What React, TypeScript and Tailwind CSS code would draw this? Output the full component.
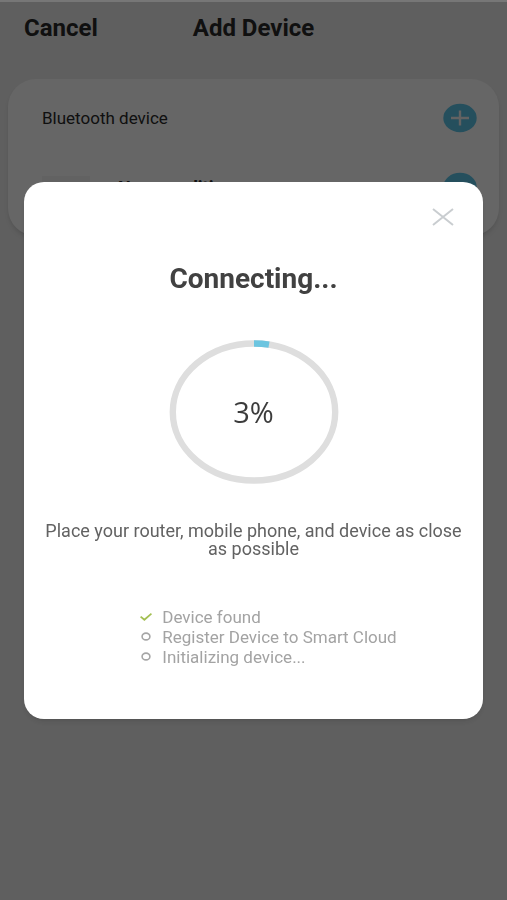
import React from "react";

function RoundButton({ label, icon }: { label: string; icon: "plus" | "minus" }) {
  return (
    <button type="button" aria-label={label} className="block shrink-0">
      <svg width="34" height="30" viewBox="0 0 34 30" fill="none" aria-hidden="true">
        <ellipse cx="17" cy="15" rx="16.7" ry="14.2" fill="#5ec5e8" />
        <path d={icon === "plus" ? "M8 15H26M17 7.5V22.5" : "M8 15H26"} stroke="#f4f4f4" strokeWidth="2.4" />
      </svg>
    </button>
  );
}

function ProgressRing({ value }: { value: number }) {
  return (
    <div
      role="progressbar"
      aria-label="Connecting"
      aria-valuenow={value}
      aria-valuemin={0}
      aria-valuemax={100}
      className="mt-[45px] grid h-[144px] w-[170px] place-items-center self-center"
    >
      <svg width="170" height="144" viewBox="0 0 170 144" fill="none" className="col-start-1 row-start-1" aria-hidden="true">
        <ellipse cx="85" cy="72" rx="81.2" ry="68.5" stroke="#dedede" strokeWidth="6.4" />
        <path d="M85 3.5Q93 3.5 100 4.7" stroke="#6cc5e0" strokeWidth="6.4" />
      </svg>
      <span className="col-start-1 row-start-1 font-['Open_Sans',sans-serif] text-[29px] leading-8 text-[#3c3c3c]">
        {value}%
      </span>
    </div>
  );
}

function StepIcon({ done }: { done: boolean }) {
  return done ? (
    <svg width="12" height="10" viewBox="0 0 12 10" fill="none" aria-hidden="true">
      <path d="M.6 4.6L4.4 7.8L11.5 1.6" stroke="#a3bf52" strokeWidth="1.8" />
    </svg>
  ) : (
    <svg width="12" height="10" viewBox="0 0 12 10" fill="none" aria-hidden="true">
      <ellipse cx="6" cy="4.5" rx="3.9" ry="3.4" stroke="#a6a6a6" strokeWidth="1.6" />
    </svg>
  );
}

const steps = [
  { text: "Device found", done: true },
  { text: "Register Device to Smart Cloud", done: false },
  { text: "Initializing device...", done: false },
];

export default function App() {
  return (
    <div className="min-h-screen bg-[#eeeeee] font-[Roboto,sans-serif] text-[#2a2a2a]">
      <header className="grid grid-cols-[1fr_auto_1fr] items-center px-6 pt-3">
        <button type="button" className="justify-self-start text-[24px] leading-8 font-bold">
          Cancel
        </button>
        <h1 className="text-[24px] leading-8 font-bold">Add Device</h1>
      </header>
      <main className="mx-2 mt-[35px] rounded-[28px] bg-white pt-6 pr-[22px] pb-8 pl-[34px] shadow-md">
        <div className="flex items-center justify-between">
          <h2 className="text-[17px] leading-6">Bluetooth device</h2>
          <RoundButton label="Add Bluetooth device" icon="plus" />
        </div>
        <div className="mt-[39px] flex items-start">
          <span className="mt-1 h-7 w-12 bg-[#f4f4f4]" />
          <span className="ml-7 flex-1 pt-0.5 text-lg font-bold">Non-condition</span>
          <RoundButton label="Remove Non-condition" icon="minus" />
        </div>
      </main>

      <div className="fixed inset-0 flex items-center border-t-2 border-black/50 bg-black/60 bg-clip-padding px-6 pb-0.5">
        <section
          role="dialog"
          aria-modal="true"
          aria-labelledby="status"
          className="flex w-full flex-col rounded-[20px] bg-white pt-6 pb-[52px] shadow-md"
        >
          <button type="button" aria-label="Close" className="mr-[29px] self-end">
            <svg width="22" height="22" viewBox="0 0 22 22" fill="none" aria-hidden="true">
              <path d="M1 3L21 19M21 3L1 19" stroke="#c9cdd0" strokeWidth="2" />
            </svg>
          </button>
          <h2 id="status" className="mt-[35px] text-center text-[28px] leading-8 font-bold text-[#414141]">
            Connecting...
          </h2>
          <ProgressRing value={3} />
          <p className="mt-[38px] px-4 text-center text-[18px] leading-[18px] text-[#626262]">
            Place your router, mobile phone, and device as close as possible
          </p>
          <ul className="mt-[49px] self-center pl-[30px] text-[17px] leading-5 text-[#a3a3a3]">
            {steps.map((step) => (
              <li key={step.text} className="flex items-center gap-2.5">
                <StepIcon done={step.done} />
                {step.text}
              </li>
            ))}
          </ul>
        </section>
      </div>
    </div>
  );
}
